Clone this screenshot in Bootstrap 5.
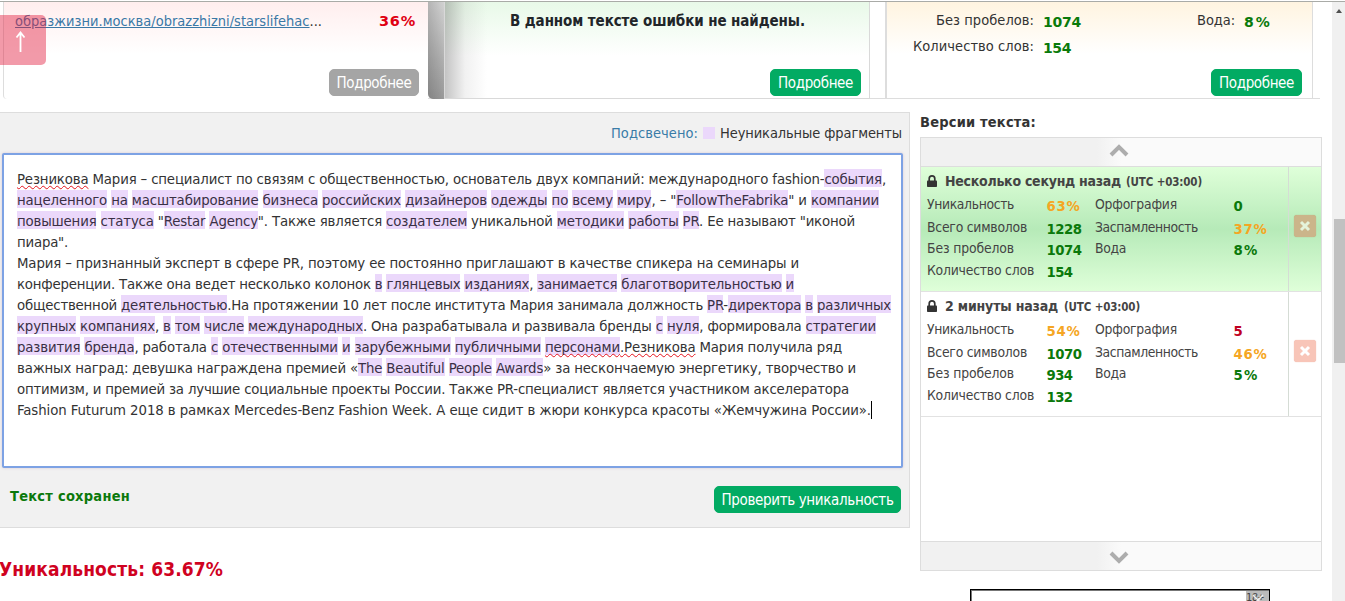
<!DOCTYPE html>
<html lang="ru">
<head>
<meta charset="utf-8">
<meta name="viewport" content="width=device-width, initial-scale=1">
<title>Проверка уникальности</title>
<link href="https://cdn.jsdelivr.net/npm/bootstrap@5.3.0/dist/css/bootstrap.min.css" rel="stylesheet">
<style>
body{font-family:Tahoma,"DejaVu Sans Condensed","DejaVu Sans",sans-serif;font-stretch:condensed;font-size:14.5px;color:#333;background:#fff;height:601px;line-height:20px}
.t{display:inline-block;white-space:nowrap}
.browser-edge{height:2px;border-bottom:1px solid #a9aba7}
.page-main{width:1332px}
.rail{width:13px;background:#f0f0f0;padding-left:2px}
.rail svg{display:block;margin:0 0 0 1px}
.thumb{height:144px;background:#c1c1c1;margin-top:201px}
.tiles{height:97px;width:1320px}
.tile-red{width:425px;margin-left:3px;border-left:1px solid #ddd;border-radius:0 0 0 4px;background:linear-gradient(#ffeeee,#fff 52px)}
.tile-gap{width:16px;height:97px;border-radius:0 0 0 5px;background:linear-gradient(90deg,rgba(0,0,0,.14),transparent),linear-gradient(#d2d2d2,#999)}
.tile-green{width:426px;border:1px solid #d9d9d9;border-top:0;background:linear-gradient(90deg,rgba(90,90,90,.36),rgba(140,140,140,.12) 20px,transparent 42px) 0 0/100% 100%,linear-gradient(#e8f9e8,#fff 54px)}
.tile-amber{width:428px;margin-left:15px;border:1px solid #ddd;border-top:0;border-left-width:2px;background:linear-gradient(#fff4e0,#fff 52px)}
.tiles-line{border-bottom:1px solid #ddd;width:892px;margin-left:428px;height:1px;margin-top:-1px}
.b-act{--bs-btn-color:#fff;--bs-btn-bg:#02ab63;--bs-btn-border-color:#02ab63;--bs-btn-border-radius:5px;--bs-btn-padding-x:0;--bs-btn-padding-y:1px;--bs-btn-font-size:15px;--bs-btn-line-height:25px;width:91px;height:27px}
.b-act .t{vertical-align:top}
.b-mute{--bs-btn-bg:#a5a5a5;--bs-btn-border-color:#a5a5a5;width:90px}
.link-src{color:#3a78a6;text-decoration:underline}
.num,.tnum,.stats .v{font-family:Verdana,"DejaVu Sans",sans-serif;font-stretch:normal}
.tnum{color:#0a7a0a;font-weight:bold;font-size:14px}
.to-top{left:0;top:15px;width:46px;height:50px;background:rgba(226,30,65,.45);border-radius:0 5px 5px 0}
.editor-box{width:910px;height:416px;margin-top:13px;background:#f1f1f1;border:1px solid #ddd;border-left:0}
.sw{width:12px;height:12px;background:#ebd8fb}
.editor-area{width:901px;height:315px;margin-left:2px;border:2px solid #7da2e4;border-radius:2px;background:#fff;padding:13px 0 0 13px;box-shadow:0 0 3px #d9c9d3;font-size:14.8px;line-height:21px;color:#333}
.editor-area .ln{height:21px}
.editor-area b{font-weight:normal;background:#ebd8fb;padding:1px 0 0;color:#3a3045}
.sp{text-decoration:underline wavy #e5141c 1px;text-underline-offset:1px;text-decoration-skip-ink:none}
.caret{display:inline-block;width:1px;height:18px;background:#000;vertical-align:-4px}
.h-red{color:#d0021f;font-weight:bold;font-size:19px}
.side{width:402px;margin-left:10px;margin-top:13px}
.ver-box{height:434px;border:1px solid #ddd}
.ver-bar{height:29px;background:linear-gradient(90deg,#f1f1f1 44%,#fafafa 50%);border-bottom:1px solid #ddd}
.ver-bar.end{border-top:1px solid #ddd;border-bottom:0;height:30px}
.ver{height:125px;border-bottom:1px solid #e2e2e2}
.ver.on{background:linear-gradient(#dfffd9,#b6eab8 50%,#dfffd9)}
.ver-main{width:368px;border-right:1px solid #d5dcd5;padding-left:6px;padding-top:4px}
.ver-title{height:22px;font-weight:bold;color:#444;font-size:14px}
.ver-title small{font-size:11.5px}
.stats{display:grid;grid-template-columns:120px 48px 139px auto;grid-template-rows:23px 21px 22px 22px;font-size:13.8px;line-height:22px;color:#444}
.stats .v{font-weight:bold;color:#0b790b;padding-top:3px;font-size:13.3px;margin-left:-.5px}
.stats .o{color:#f5a623}
.stats .r{color:#c00022}
.del{width:22px;height:22px;border-radius:3px;background:#f8c5b8;margin:48px 0 0 5px;box-shadow:0 0 1px #e8a898}
.on .del{background:#cbb58a;box-shadow:0 0 1px #b5a070}
.banner{width:300px;height:12px;margin:18px 0 0 50px;border:1px solid #000;border-bottom:0;box-shadow:inset 0 1px #777,inset 1px 0 #777}
.age{width:23px;background:#bbb;font:10px/13px "DejaVu Sans Mono",monospace;color:#444;margin-top:1px}
</style>
</head>
<body class="overflow-hidden position-relative">
<div class="browser-edge"></div>
<div class="d-flex" style="height:599px">
<main class="page-main">
  <div class="tiles d-flex">
    <section class="tile-red d-flex flex-column justify-content-between">
      <div class="d-flex justify-content-between" style="padding:9px 12px 0 11px">
        <span class="t" data-w="307"><a class="link-src">образжизни.москва/obrazzhizni/starslifehac</a>...</span>
        <span class="t num fw-bold" style="color:#e00012" data-w="37">36%</span>
      </div>
      <div class="text-end" style="padding:0 9px 3px 0"><button class="btn b-act b-mute"><span class="t" data-w="75">Подробнее</span></button></div>
    </section>
    <div class="tile-gap"></div>
    <section class="tile-green d-flex flex-column justify-content-between">
      <div class="fw-bold text-dark" style="padding:9px 0 0 65px;font-size:15px"><span class="t" data-w="295">В данном тексте ошибки не найдены.</span></div>
      <div class="text-end" style="padding:0 8px 2px 0"><button class="btn b-act"><span class="t" data-w="75">Подробнее</span></button></div>
    </section>
    <section class="tile-amber d-flex flex-column justify-content-between">
      <div class="d-flex" style="padding-top:8px">
        <div class="text-end" style="width:147px"><div style="height:26px"><span class="t" data-w="98">Без пробелов:</span></div><div><span class="t" data-w="121">Количество слов:</span></div></div>
        <div class="tnum" style="padding:2px 0 0 9px;width:115px"><div style="height:26px"><span class="t" data-w="38">1074</span></div><div><span class="t" data-w="28">154</span></div></div>
        <div class="text-end" style="width:86px"><span class="t" data-w="38">Вода:</span></div>
        <div class="tnum" style="padding:2px 0 0 9px"><span class="t" data-w="28">8%</span></div>
      </div>
      <div class="text-end" style="padding:0 10px 2px 0;margin-top:-12px"><button class="btn b-act"><span class="t" data-w="75">Подробнее</span></button></div>
    </section>
  </div>
  <div class="tiles-line"></div>
  <div class="d-flex">
    <div>
      <section class="editor-box">
        <div class="d-flex justify-content-end align-items-center" style="height:40px;padding-right:7px">
          <span class="t" style="color:#3a7ca8" data-w="87">Подсвечено:</span><span class="sw" style="margin:0 5px"></span><span class="t" data-w="182">Неуникальные фрагменты</span>
        </div>
        <div class="editor-area">
          <div class="ln"><span class="t" data-w="869"><span class="sp">Резникова</span> Мария – специалист по связям с общественностью, основатель двух компаний: международного fashion-<b>события</b>,</span></div>
          <div class="ln"><span class="t" data-w="862"><b>нацеленного</b> <b>на</b> <b>масштабирование</b> <b>бизнеса</b> <b>российских</b> <b>дизайнеров</b> <b>одежды</b> <b>по</b> <b>всему</b> <b>миру</b>, – "<b>FollowTheFabrika</b>" и <b>компании</b></span></div>
          <div class="ln"><span class="t" data-w="838"><b>повышения</b> <b>статуса</b> "<b>Restar</b> <b>Agency</b>". Также является <b>создателем</b> уникальной <b>методики</b> <b>работы</b> <b>PR</b>. Ее называют "иконой</span></div>
          <div class="ln"><span class="t" data-w="51">пиара".</span></div>
          <div class="ln"><span class="t" data-w="782">Мария – признанный эксперт в сфере PR, поэтому ее постоянно приглашают в качестве спикера на семинары и</span></div>
          <div class="ln"><span class="t" data-w="777">конференции. Также она ведет несколько колонок <b>в</b> <b>глянцевых</b> <b>изданиях</b>, <b>занимается</b> <b>благотворительностью</b> <b>и</b></span></div>
          <div class="ln"><span class="t" data-w="874">общественной <b>деятельностью</b>.На протяжении 10 лет после института Мария занимала должность <b>PR</b>-<b>директора</b> <b>в</b> <b>различных</b></span></div>
          <div class="ln"><span class="t" data-w="859"><b>крупных</b> <b>компаниях</b>, <b>в</b> <b>том</b> <b>числе</b> <b>международных</b>. Она разрабатывала и развивала бренды <b>с</b> <b>нуля</b>, формировала <b>стратегии</b></span></div>
          <div class="ln"><span class="t" data-w="825"><b>развития</b> <b>бренда</b>, работала <b>с</b> <b>отечественными</b> <b>и</b> <b>зарубежными</b> <b>публичными</b> <span class="sp"><b>персонами</b>.Резникова</span> Мария получила ряд</span></div>
          <div class="ln"><span class="t" data-w="839">важных наград: девушка награждена премией «<b>The</b> <b>Beautiful</b> <b>People</b> <b>Awards</b>» за нескончаемую энергетику, творчество и</span></div>
          <div class="ln"><span class="t" data-w="832">оптимизм, и премией за лучшие социальные проекты России. Также PR-специалист является участником акселератора</span></div>
          <div class="ln"><span class="t" data-w="854">Fashion Futurum 2018 в рамках Mercedes-Benz Fashion Week. А еще сидит в жюри конкурса красоты «Жемчужина России».</span><span class="caret"></span></div>
        </div>
        <div class="d-flex justify-content-between" style="padding:18px 8px 0 10px">
          <span class="t fw-bold" style="color:#0b790b" data-w="120">Текст сохранен</span>
          <button class="btn b-act" style="width:187px"><span class="t" data-w="172">Проверить уникальность</span></button>
        </div>
      </section>
      <div class="h-red" style="margin:31px 0 0 -1px"><span class="t" data-w="224">Уникальность: 63.67%</span></div>
    </div>
    <aside class="side">
      <div class="fw-bold" style="height:25px"><span class="t" data-w="116">Версии текста:</span></div>
      <div class="ver-box d-flex flex-column">
        <div class="ver-bar"><svg width="22" height="16" style="margin:4px 0 0 187px;display:block" viewBox="0 0 22 16"><path d="M3 13l8-8 8 8" fill="none" stroke="#adadad" stroke-width="4"/></svg></div>
        <div class="ver on d-flex">
          <div class="ver-main">
            <div class="ver-title"><svg width="10" height="12" style="margin-right:8px;vertical-align:-1px" viewBox="0 0 10 12"><path d="M2.2 6V3.7a2.8 2.8 0 0 1 5.6 0V6" fill="none" stroke="#333" stroke-width="1.7"/><rect y="5.5" width="10" height="6.5" rx=".8" fill="#333"/></svg><span class="t" data-w="176">Несколько секунд назад</span><small class="t" style="margin-left:5px" data-w="76">(UTC +03:00)</small></div>
            <div class="stats">
              <span><span class="t" data-w="87">Уникальность</span></span><span class="v o"><span class="t" data-w="34">63%</span></span><span><span class="t" data-w="82">Орфография</span></span><span class="v">0</span>
              <span><span class="t" data-w="100">Всего символов</span></span><span class="v"><span class="t" data-w="35">1228</span></span><span><span class="t" data-w="103">Заспамленность</span></span><span class="v o"><span class="t" data-w="34">37%</span></span>
              <span><span class="t" data-w="87">Без пробелов</span></span><span class="v"><span class="t" data-w="35">1074</span></span><span><span class="t" data-w="31">Вода</span></span><span class="v"><span class="t" data-w="25">8%</span></span>
              <span><span class="t" data-w="107">Количество слов</span></span><span class="v"><span class="t" data-w="26">154</span></span>
            </div>
          </div>
          <div class="del"><svg width="22" height="22" style="display:block"><path d="M7 7l8 8M15 7l-8 8" stroke="#e5f3da" stroke-width="3"/></svg></div>
        </div>
        <div class="ver d-flex">
          <div class="ver-main">
            <div class="ver-title"><svg width="10" height="12" style="margin-right:8px;vertical-align:-1px" viewBox="0 0 10 12"><path d="M2.2 6V3.7a2.8 2.8 0 0 1 5.6 0V6" fill="none" stroke="#333" stroke-width="1.7"/><rect y="5.5" width="10" height="6.5" rx=".8" fill="#333"/></svg><span class="t" data-w="113">2 минуты назад</span><small class="t" style="margin-left:6px" data-w="76">(UTC +03:00)</small></div>
            <div class="stats">
              <span><span class="t" data-w="87">Уникальность</span></span><span class="v o"><span class="t" data-w="34">54%</span></span><span><span class="t" data-w="82">Орфография</span></span><span class="v r">5</span>
              <span><span class="t" data-w="100">Всего символов</span></span><span class="v"><span class="t" data-w="35">1070</span></span><span><span class="t" data-w="103">Заспамленность</span></span><span class="v o"><span class="t" data-w="34">46%</span></span>
              <span><span class="t" data-w="87">Без пробелов</span></span><span class="v"><span class="t" data-w="26">934</span></span><span><span class="t" data-w="31">Вода</span></span><span class="v"><span class="t" data-w="25">5%</span></span>
              <span><span class="t" data-w="107">Количество слов</span></span><span class="v"><span class="t" data-w="26">132</span></span>
            </div>
          </div>
          <div class="del"><svg width="22" height="22" style="display:block"><path d="M7 7l8 8M15 7l-8 8" stroke="#fff" stroke-width="3"/></svg></div>
        </div>
        <div class="ver-bar end mt-auto" style="height:29px"><svg width="22" height="16" style="margin:7px 0 0 187px;display:block" viewBox="0 0 22 16"><path d="M3 4l8 8 8-8" fill="none" stroke="#adadad" stroke-width="4"/></svg></div>
      </div>
      <div class="banner d-flex justify-content-end overflow-hidden"><div class="age position-relative">18+<svg class="position-absolute" style="left:6px;top:3px" width="12" height="12"><path d="M1 1l10 10M11 1L1 11" stroke="#eee" stroke-width="1.5"/></svg></div></div>
    </aside>
  </div>
</main>
<div class="rail"><svg width="8" height="16"><path d="M1 11l3-4 3 4z" fill="#505050"/></svg><div class="thumb"></div></div>
</div>
<a class="to-top position-absolute"><svg width="46" height="50" style="display:block"><path d="M20.5 37V18M16.5 22.5l4-5 4 5" fill="none" stroke="#fff" stroke-width="1.8"/></svg></a>
<script src="https://cdn.jsdelivr.net/npm/bootstrap@5.3.0/dist/js/bootstrap.bundle.min.js"></script>
<script>
// Tracks each label so that it fills the width given in data-w
document.querySelectorAll('.t[data-w]').forEach(function (el) {
  var natural = el.getBoundingClientRect().width;
  el.style.letterSpacing = (el.dataset.w - natural) / el.textContent.length + 'px';
});
</script>
</body>
</html>
